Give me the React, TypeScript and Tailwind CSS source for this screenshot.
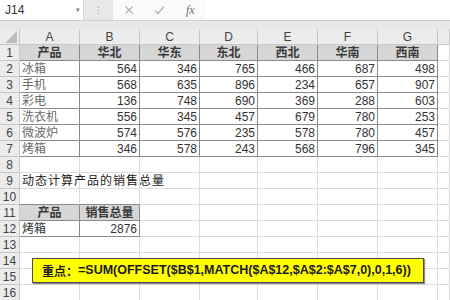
import React from "react";

const COLS = "grid grid-cols-[20px_60px_60px_60px_58px_60px_60px_60px_12px]";
const GRID = "border-[#dcdcdc]";
const DARK = "border-[#8a8a8a]";

type CellDef = { t?: string; align?: "l" | "r" | "c"; dark?: boolean; fill?: boolean; bold?: boolean; color?: string; darkBottomOnly?: boolean; wide?: boolean };

const header = ["产品", "华北", "华东", "东北", "西北", "华南", "西南"];
const data: [string, number[]][] = [
  ["冰箱", [564, 346, 765, 466, 687, 498]],
  ["手机", [568, 635, 896, 234, 657, 907]],
  ["彩电", [136, 748, 690, 369, 288, 603]],
  ["洗衣机", [556, 345, 457, 679, 780, 253]],
  ["微波炉", [574, 576, 235, 578, 780, 457]],
  ["烤箱", [346, 578, 243, 568, 796, 345]],
];

function Cell({ c }: { c: CellDef }) {
  const border = c.dark ? DARK : GRID;
  const align = c.align === "r" ? "justify-end pr-[2px]" : c.align === "c" ? "justify-center" : "justify-start pl-[2px]";
  const bottom = c.darkBottomOnly ? "border-b-[#8a8a8a] border-r-[#dcdcdc]" : border;
  return (
    <div
      className={`h-[16px] border-r border-b ${bottom} flex items-center overflow-visible whitespace-nowrap text-[12px] leading-none ${align} ${c.fill ? "bg-[#d6d6d6]" : ""} ${c.bold ? "font-semibold" : ""} ${c.wide ? "tracking-[1px]" : ""}`}
      style={{ color: c.color }}
    >
      {c.t}
    </div>
  );
}

function Row({ n, cells }: { n: number; cells: CellDef[] }) {
  const full: CellDef[] = [];
  for (let i = 0; i < 8; i++) full.push(cells[i] || {});
  return (
    <div className={COLS}>
      <div className="h-[16px] bg-[#ececec] border-r border-b border-[#c8c8c8] flex items-center justify-center text-[12px] text-[#444] leading-none">
        {n}
      </div>
      {full.map((c, i) => (
        <Cell key={i} c={c} />
      ))}
    </div>
  );
}

export default function App() {
  const rows: { n: number; cells: CellDef[] }[] = [];
  rows.push({
    n: 1,
    cells: header.map((h) => ({ t: h, align: "c" as const, dark: true, fill: true, bold: true, color: "#3a3a3a" })),
  });
  data.forEach(([name, nums], i) => {
    rows.push({
      n: i + 2,
      cells: [
        { t: name, dark: true, color: "#6a6a6a" },
        ...nums.map((v) => ({ t: String(v), align: "r" as const, dark: true, color: "#333" })),
      ],
    });
  });
  rows.push({ n: 8, cells: [] });
  rows.push({ n: 9, cells: [{ t: "动态计算产品的销售总量", color: "#222", wide: true }] });
  rows.push({ n: 10, cells: [{ darkBottomOnly: true }, { darkBottomOnly: true }] });
  rows.push({
    n: 11,
    cells: [
      { t: "产品", align: "c", dark: true, fill: true, bold: true, color: "#3a3a3a" },
      { t: "销售总量", align: "c", dark: true, fill: true, bold: true, color: "#3a3a3a" },
    ],
  });
  rows.push({
    n: 12,
    cells: [
      { t: "烤箱", dark: true, color: "#333" },
      { t: "2876", align: "r", dark: true, color: "#333" },
    ],
  });
  for (let n = 13; n <= 16; n++) rows.push({ n, cells: [] });

  return (
    <div className="relative w-[450px] h-[300px] overflow-hidden bg-white font-['Liberation_Sans','Noto_Sans_CJK_SC',sans-serif]">
      {/* formula bar */}
      <div className="h-[21px] flex bg-[#e8e8e8] border-b border-[#d0d0d0]">
        <div className="w-[84px] h-[20px] bg-white border-r border-[#d4d4d4] flex items-center justify-between pl-[5px] pr-[3px]">
          <span className="text-[12px] text-[#333]">J14</span>
          <span className="text-[7px] text-[#777]">▾</span>
        </div>
        <div className="w-[29px] flex items-center justify-center">
          <div className="flex flex-col gap-[2px]">
            <div className="w-[1px] h-[1px] bg-[#999]" />
            <div className="w-[1px] h-[1px] bg-[#999]" />
            <div className="w-[1px] h-[1px] bg-[#999]" />
          </div>
        </div>
        <div className="flex-1 h-[20px] bg-white flex items-center">
          <div className="w-[92px] h-[20px] flex items-center bg-[#fafafa] pl-[11px]">
            <svg width="10" height="10" viewBox="0 0 10 10" className="mr-[20px]">
              <path d="M1.5 1.5L8.5 8.5M8.5 1.5L1.5 8.5" stroke="#b0b0b0" strokeWidth="1.2" />
            </svg>
            <svg width="11" height="10" viewBox="0 0 11 10" className="mr-[21px]">
              <path d="M1 5.5L4 8.5L10 1.5" stroke="#b0b0b0" strokeWidth="1.2" fill="none" />
            </svg>
            <span className="text-[12px] italic text-[#777] font-['Liberation_Serif',serif]">fx</span>
          </div>
        </div>
      </div>
      {/* gray band + column headers */}
      <div className="h-[8px] bg-[#e8e8e8]" />
      <div className={`${COLS} h-[16px]`}>
        <div className="h-[16px] bg-[#ececec] border-r border-b border-[#c8c8c8] relative">
          <svg width="12" height="12" viewBox="0 0 12 12" className="absolute right-[2px] bottom-[1px]">
            <path d="M12 0L12 12L0 12Z" fill="#bdbdbd" />
          </svg>
        </div>
        {["A", "B", "C", "D", "E", "F", "G", ""].map((l, i) => (
          <div
            key={i}
            className="h-[16px] bg-[#ececec] border-r border-b border-[#c8c8c8] flex items-center justify-center text-[12px] text-[#444] leading-none"
          >
            {l}
          </div>
        ))}
      </div>
      {rows.map((r) => (
        <Row key={r.n} n={r.n} cells={r.cells} />
      ))}
      {/* callout */}
      <div className="absolute left-[32px] top-[258px] w-[392px] h-[25px] bg-[#ffff00] border border-[#4a4a4a] shadow-[1px_1px_1px_rgba(0,0,0,0.45)] flex items-center pl-[9px] text-[12.5px] font-bold text-[#1a1a1a] whitespace-nowrap">
        <span className="font-['Noto_Sans_CJK_SC',sans-serif] text-[12px]">重点：</span>
        <span>=SUM(OFFSET($B$1,MATCH($A$12,$A$2:$A$7,0),0,1,6))</span>
      </div>
    </div>
  );
}
